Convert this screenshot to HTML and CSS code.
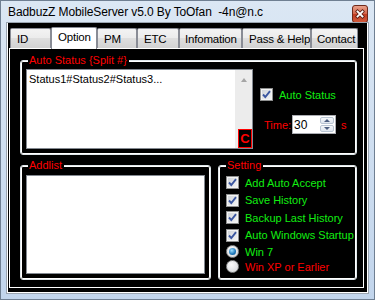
FILE: index.html
```html
<!DOCTYPE html>
<html lang="en">
<head>
    <meta charset="UTF-8">
    <meta name="viewport" content="width=device-width, initial-scale=1.0">
    <link rel="stylesheet" href="styles.css">
</head>
<body>
    <div class="window">
        <div class="titlebar">
            <span class="title">BadbuzZ MobileServer v5.0 By ToOfan&nbsp; -4n@n.c</span>
            <div class="close" aria-label="Close">
                <svg width="10" height="10" viewBox="0 0 10 10">
                    <path d="M2.5 2.5 L7.5 7.5 M7.5 2.5 L2.5 7.5" stroke="#5a1d12" stroke-width="3.4" stroke-linecap="square"/>
                    <path d="M2.5 2.5 L7.5 7.5 M7.5 2.5 L2.5 7.5" stroke="#fff" stroke-width="1.8" stroke-linecap="square"/>
                </svg>
            </div>
        </div>

        <div class="client">
            <div class="tabs">
                <div class="tab w-id">ID</div>
                <div class="tab w-option active">Option</div>
                <div class="tab w-pm">PM</div>
                <div class="tab w-etc">ETC</div>
                <div class="tab w-info">Infomation</div>
                <div class="tab w-pass">Pass &amp; Help</div>
                <div class="tab w-contact">Contact</div>
            </div>

            <div class="page">
                <div class="group group-status">
                    <span class="group-title">Auto Status {Split #}</span>
                    <div class="status-box">
                        <div class="status-text">Status1#Status2#Status3...</div>
                        <div class="scrollbar">
                            <span class="arrow-up"></span>
                            <span class="clear-btn">C</span>
                        </div>
                    </div>
                    <div class="status-opts">
                        <div class="opt">
                            <span class="cb">
                                <svg width="11" height="11" viewBox="0 0 11 11"><path d="M2 5.5 L4.3 8 L9 2.2" fill="none" stroke="#3b56a0" stroke-width="1.9"/></svg>
                            </span>
                            <span class="green">Auto Status</span>
                        </div>
                        <div class="time-row">
                            <span class="red">Time:</span>
                            <div class="spin">
                                <span class="spin-value">30</span>
                                <div class="spin-btns">
                                    <span class="spin-btn"><i class="tri-up"></i></span>
                                    <span class="spin-btn"><i class="tri-down"></i></span>
                                </div>
                            </div>
                            <span class="red unit">s</span>
                        </div>
                    </div>
                </div>

                <div class="lower">
                    <div class="group group-add">
                        <span class="group-title">Addlist</span>
                        <div class="listbox"></div>
                    </div>

                    <div class="group group-setting">
                        <span class="group-title">Setting</span>
                        <div class="opt row-check">
                            <span class="cb"><svg width="11" height="11" viewBox="0 0 11 11"><path d="M2 5.5 L4.3 8 L9 2.2" fill="none" stroke="#3b56a0" stroke-width="1.9"/></svg></span>
                            <span class="green">Add Auto Accept</span>
                        </div>
                        <div class="opt row-check">
                            <span class="cb"><svg width="11" height="11" viewBox="0 0 11 11"><path d="M2 5.5 L4.3 8 L9 2.2" fill="none" stroke="#3b56a0" stroke-width="1.9"/></svg></span>
                            <span class="green">Save History</span>
                        </div>
                        <div class="opt row-check">
                            <span class="cb"><svg width="11" height="11" viewBox="0 0 11 11"><path d="M2 5.5 L4.3 8 L9 2.2" fill="none" stroke="#3b56a0" stroke-width="1.9"/></svg></span>
                            <span class="green">Backup Last History</span>
                        </div>
                        <div class="opt row-check">
                            <span class="cb"><svg width="11" height="11" viewBox="0 0 11 11"><path d="M2 5.5 L4.3 8 L9 2.2" fill="none" stroke="#3b56a0" stroke-width="1.9"/></svg></span>
                            <span class="green">Auto Windows Startup</span>
                        </div>
                        <div class="opt row-radio">
                            <span class="radio checked"></span>
                            <span class="green">Win 7</span>
                        </div>
                        <div class="opt row-radio">
                            <span class="radio"></span>
                            <span class="red">Win XP or Earlier</span>
                        </div>
                    </div>
                </div>
            </div>
        </div>
    </div>
</body>
</html>
```

FILE: styles.css
```css
/* Win7 style window, black themed form */
:root {
    --frame: #d3e1f1;
    --frame-dark: #c2d5ec;
    --red: #ff0000;
    --green: #12ee12;
    --ctl-border: #8e8f8f;
}

* {
    margin: 0;
    padding: 0;
    box-sizing: border-box;
}

body {
    background: var(--frame);
    font-family: 'Liberation Sans', Arial, sans-serif;
    font-size: 11px;
    white-space: nowrap;
}

.window {
    width: 375px;
    height: 300px;
    border: 1px solid #6f7f92;
    background: linear-gradient(to bottom, #dbe7f4, var(--frame-dark));
    padding: 0 6px 6px 6px;
    display: flex;
    flex-direction: column;
}

.titlebar {
    height: 22px;
    margin: 0 -6px;
    padding: 0 6px 0 7px;
    display: flex;
    align-items: center;
    justify-content: space-between;
}

.title {
    font-size: 12px;
    color: #000;
    letter-spacing: -0.1px;
}

.close {
    width: 16px;
    height: 18px;
    margin-top: 4px;
    align-self: flex-start;
    border: 1px solid #6e2a1c;
    border-radius: 3px;
    background-color: #cc4a2e;
    background-image: linear-gradient(to bottom, #e8a08a, #d4644a 50%, #c03a20 51%, #d25a3c);
    display: flex;
    align-items: center;
    justify-content: center;
}

/* client area */
.client {
    flex: 1;
    background: #000;
    border: 1px solid #fff;
    border-top: none;
    box-shadow: 0 0 0 1px #9aa4b0;
    padding: 4px 3px 4px 1px;
    display: flex;
    flex-direction: column;
}

.tabs {
    height: 21px;
    margin-left: 1px;
    display: flex;
    align-items: flex-end;
}

.tab {
    height: 20px;
    line-height: 20px;
    padding-left: 6px;
    font-size: 11.5px;
    letter-spacing: -0.2px;
    color: #000;
    border: 1px solid #898c95;
    border-bottom: none;
    border-radius: 2px 2px 0 0;
    background: linear-gradient(to bottom, #f3f3f3, #ebebeb 50%, #dedede 50%, #d2d2d2);
    overflow: hidden;
}

.tab.active {
    height: 22px;
    line-height: 19px;
    margin-bottom: -1px;
    background: #fff;
    position: relative;
    z-index: 1;
}

.w-id { width: 41px; }
.w-option { width: 46px; }
.w-pm { width: 40px; }
.w-etc { width: 42px; }
.w-info { width: 63px; padding-left: 5px; }
.w-pass { width: 69px; padding-left: 6px; }
.w-contact { width: 47px; padding-left: 5px; }

.page {
    flex: 1;
    border: 1px solid #fff;
    padding: 11px 6px 7px 10px;
    display: flex;
    flex-direction: column;
}

/* group boxes */
.group {
    position: relative;
    border: 1px solid #dfe6ea;
    border-radius: 3px;
    box-shadow: inset 0 0 0 1px #fff;
}

.group-title {
    position: absolute;
    top: -7px;
    left: 7px;
    padding: 0 2px 0 1px;
    background: #000;
    color: var(--red);
    font-size: 11px;
    line-height: 12px;
}

.group-status {
    height: 95px;
    padding: 8px 5px 5px 5px;
    display: flex;
}

.status-box {
    width: 227px;
    border: 1px solid #838991;
    background: #fff;
    display: flex;
}

.status-text {
    flex: 1;
    padding: 3px 2px;
    font-size: 11px;
    line-height: 13px;
    color: #000;
}

.scrollbar {
    width: 17px;
    background: #ececec;
    display: flex;
    flex-direction: column;
    align-items: flex-end;
    justify-content: space-between;
}

.arrow-up {
    margin: 8px 5px 0 0;
    width: 0;
    height: 0;
    border-left: 3.5px solid transparent;
    border-right: 3.5px solid transparent;
    border-bottom: 4px solid #a5a5a5;
}

.clear-btn {
    width: 14px;
    height: 19px;
    border: 1px solid var(--red);
    background: #000;
    color: var(--red);
    font-weight: bold;
    font-size: 13px;
    line-height: 18px;
    text-align: center;
}

.status-opts {
    margin-left: 7px;
    padding-top: 19px;
    display: flex;
    flex-direction: column;
}

.opt {
    display: flex;
    align-items: center;
    gap: 6px;
    font-size: 11px;
}

.green { color: var(--green); }
.red { color: var(--red); }

.cb {
    width: 13px;
    height: 13px;
    border: 1px solid var(--ctl-border);
    background: linear-gradient(135deg, #cdd1d7, #f6f6f6);
    box-shadow: inset 0 0 0 1px #f3f3f3;
    display: flex;
    align-items: center;
    justify-content: center;
    flex-shrink: 0;
}

.time-row {
    margin: 14px 0 0 4px;
    display: flex;
    align-items: center;
    font-size: 11px;
}

.spin {
    width: 44px;
    height: 19px;
    margin-left: 1px;
    border: 1px solid #abadb3;
    background: #fff;
    display: flex;
    align-items: center;
    justify-content: space-between;
    padding: 1px;
}

.spin-value {
    font-size: 12px;
    color: #000;
}

.spin-btns {
    width: 14px;
    height: 100%;
    display: flex;
    flex-direction: column;
    gap: 1px;
}

.spin-btn {
    flex: 1;
    border: 1px solid #b9c5d3;
    border-radius: 2px;
    background: linear-gradient(to bottom, #f6f8fb, #dfe6ee);
    display: flex;
    align-items: center;
    justify-content: center;
}

.tri-up, .tri-down {
    width: 0;
    height: 0;
    border-left: 3px solid transparent;
    border-right: 3px solid transparent;
}

.tri-up { border-bottom: 3px solid #4d5f80; }
.tri-down { border-top: 3px solid #4d5f80; }

.unit { margin-left: 5px; }

.lower {
    margin-top: 10px;
    height: 115px;
    display: flex;
    gap: 7px;
}

.group-add {
    width: 191px;
    padding: 9px 5px 5px 5px;
    display: flex;
}

.listbox {
    flex: 1;
    border: 1px solid #838991;
    background: #fff;
}

.group-setting {
    width: 139px;
    padding: 8px 0 0 7px;
}

.row-check { height: 17.5px; }
.row-radio { height: 15px; }

.radio {
    width: 13px;
    height: 13px;
    border-radius: 50%;
    border: 1px solid #8e8f8f;
    background: radial-gradient(circle at 40% 35%, #fafafa, #d2d4d8);
    flex-shrink: 0;
    display: flex;
    align-items: center;
    justify-content: center;
}

.radio.checked::after {
    content: '';
    width: 7px;
    height: 7px;
    border-radius: 50%;
    background: radial-gradient(circle at 40% 35%, #9fe0ff, #1a74b8 60%, #0e4f86);
}
```
